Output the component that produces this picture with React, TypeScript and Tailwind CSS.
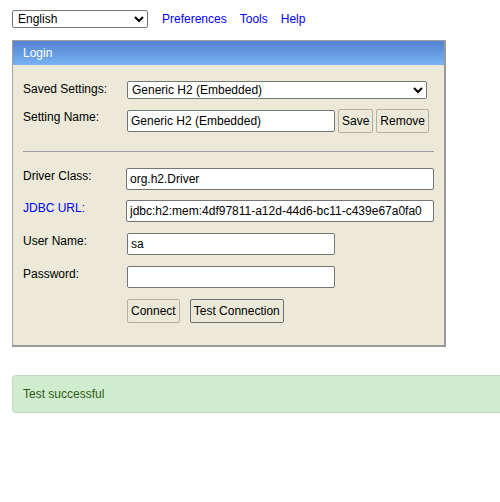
import React from 'react'

const font = { fontFamily: '"Liberation Sans", Arial, sans-serif' }

const inputCls = 'h-[22px] px-[3px] border border-[#767676] rounded-[2px] bg-white text-[12px] text-black outline-none'
const btnCls = 'h-[24px] px-[3px] border rounded-[2px] bg-[#ece9d8] text-[12px] text-black'

function Row({ label, blue, children }: { label: string; blue?: boolean; children: React.ReactNode }) {
  return (
    <div className="flex items-start">
      <div className={`w-[104px] pt-[1px] leading-[14px] text-[12px] ${blue ? 'text-[#0000ff]' : 'text-black'}`}>{label}</div>
      <div className="flex items-center">{children}</div>
    </div>
  )
}

export default function App() {
  return (
    <div className="w-full overflow-hidden bg-white min-h-[502px]" style={font}>
      <div className="pl-[12px] pt-[10px]">
        {/* top bar */}
        <div className="flex items-center h-[18px]">
          <select defaultValue="en" className="w-[136px] h-[18px] border border-[#767676] rounded-[2px] text-[12px] bg-white text-black pl-[1px]" style={font}>
            <option value="en">English</option>
          </select>
          <a className="ml-[14px] text-[12px] text-[#0000ff]">Preferences</a>
          <a className="ml-[13px] text-[12px] text-[#0000ff]">Tools</a>
          <a className="ml-[13px] text-[12px] text-[#0000ff]">Help</a>
        </div>

        {/* login panel */}
        <div className="mt-[12px] w-[434px] border border-[#a0a0a0] border-r-2 border-b-2 border-r-[#9a9a9a] border-b-[#9a9a9a] bg-[#ece9d8]">
          <div className="h-[24px] flex items-center px-[10px] bg-gradient-to-b from-[#5282cf] to-[#78b2f3] text-white text-[12px]">
            Login
          </div>
          <div className="px-[10px] pt-[16px] pb-[22px]">
            <Row label="Saved Settings:">
              <select defaultValue="h2" className="w-[300px] h-[18px] border border-[#767676] rounded-[2px] text-[12px] bg-white text-black" style={font}>
                <option value="h2">Generic H2 (Embedded)</option>
              </select>
            </Row>
            <div className="mt-[10px]">
              <Row label="Setting Name:">
                <input className={`${inputCls} w-[208px]`} style={font} defaultValue="Generic H2 (Embedded)" />
                <button className={`${btnCls} ml-[3px] border-[#b3b0a3]`} style={font}>Save</button>
                <button className={`${btnCls} ml-[3px] border-[#b3b0a3]`} style={font}>Remove</button>
              </Row>
            </div>
            <div className="mt-[18px] mb-[16px] border-t border-[#a0a0a0]" />
            <div className="flex flex-col gap-[11px]">
              <div className="-mb-[1px]">
                <Row label="Driver Class:">
                  <input className={`${inputCls} w-[308px]`} style={font} defaultValue="org.h2.Driver" />
                </Row>
              </div>
              <Row label="JDBC URL:" blue>
                <input className={`${inputCls} w-[308px]`} style={font} defaultValue="jdbc:h2:mem:4df97811-a12d-44d6-bc11-c439e67a0fa0" />
              </Row>
              <Row label="User Name:">
                <input className={`${inputCls} w-[208px]`} style={font} defaultValue="sa" />
              </Row>
              <Row label="Password:">
                <input type="password" className={`${inputCls} w-[208px]`} style={font} defaultValue="" />
              </Row>
              <div className="flex pl-[104px]">
                <button className={`${btnCls} border-[#b3b0a3]`} style={font}>Connect</button>
                <button className={`${btnCls} ml-[10px] border-[#6f6f6f]`} style={font}>Test Connection</button>
              </div>
            </div>
          </div>
        </div>

        {/* alert */}
        <div className="mt-[28px] w-[520px] h-[38px] flex items-center px-[10px] bg-[#cfeccf] border border-[#b8ddb9] rounded-[4px] text-[12px] text-[#2f5a14]">
          Test successful
        </div>
      </div>
    </div>
  )
}
